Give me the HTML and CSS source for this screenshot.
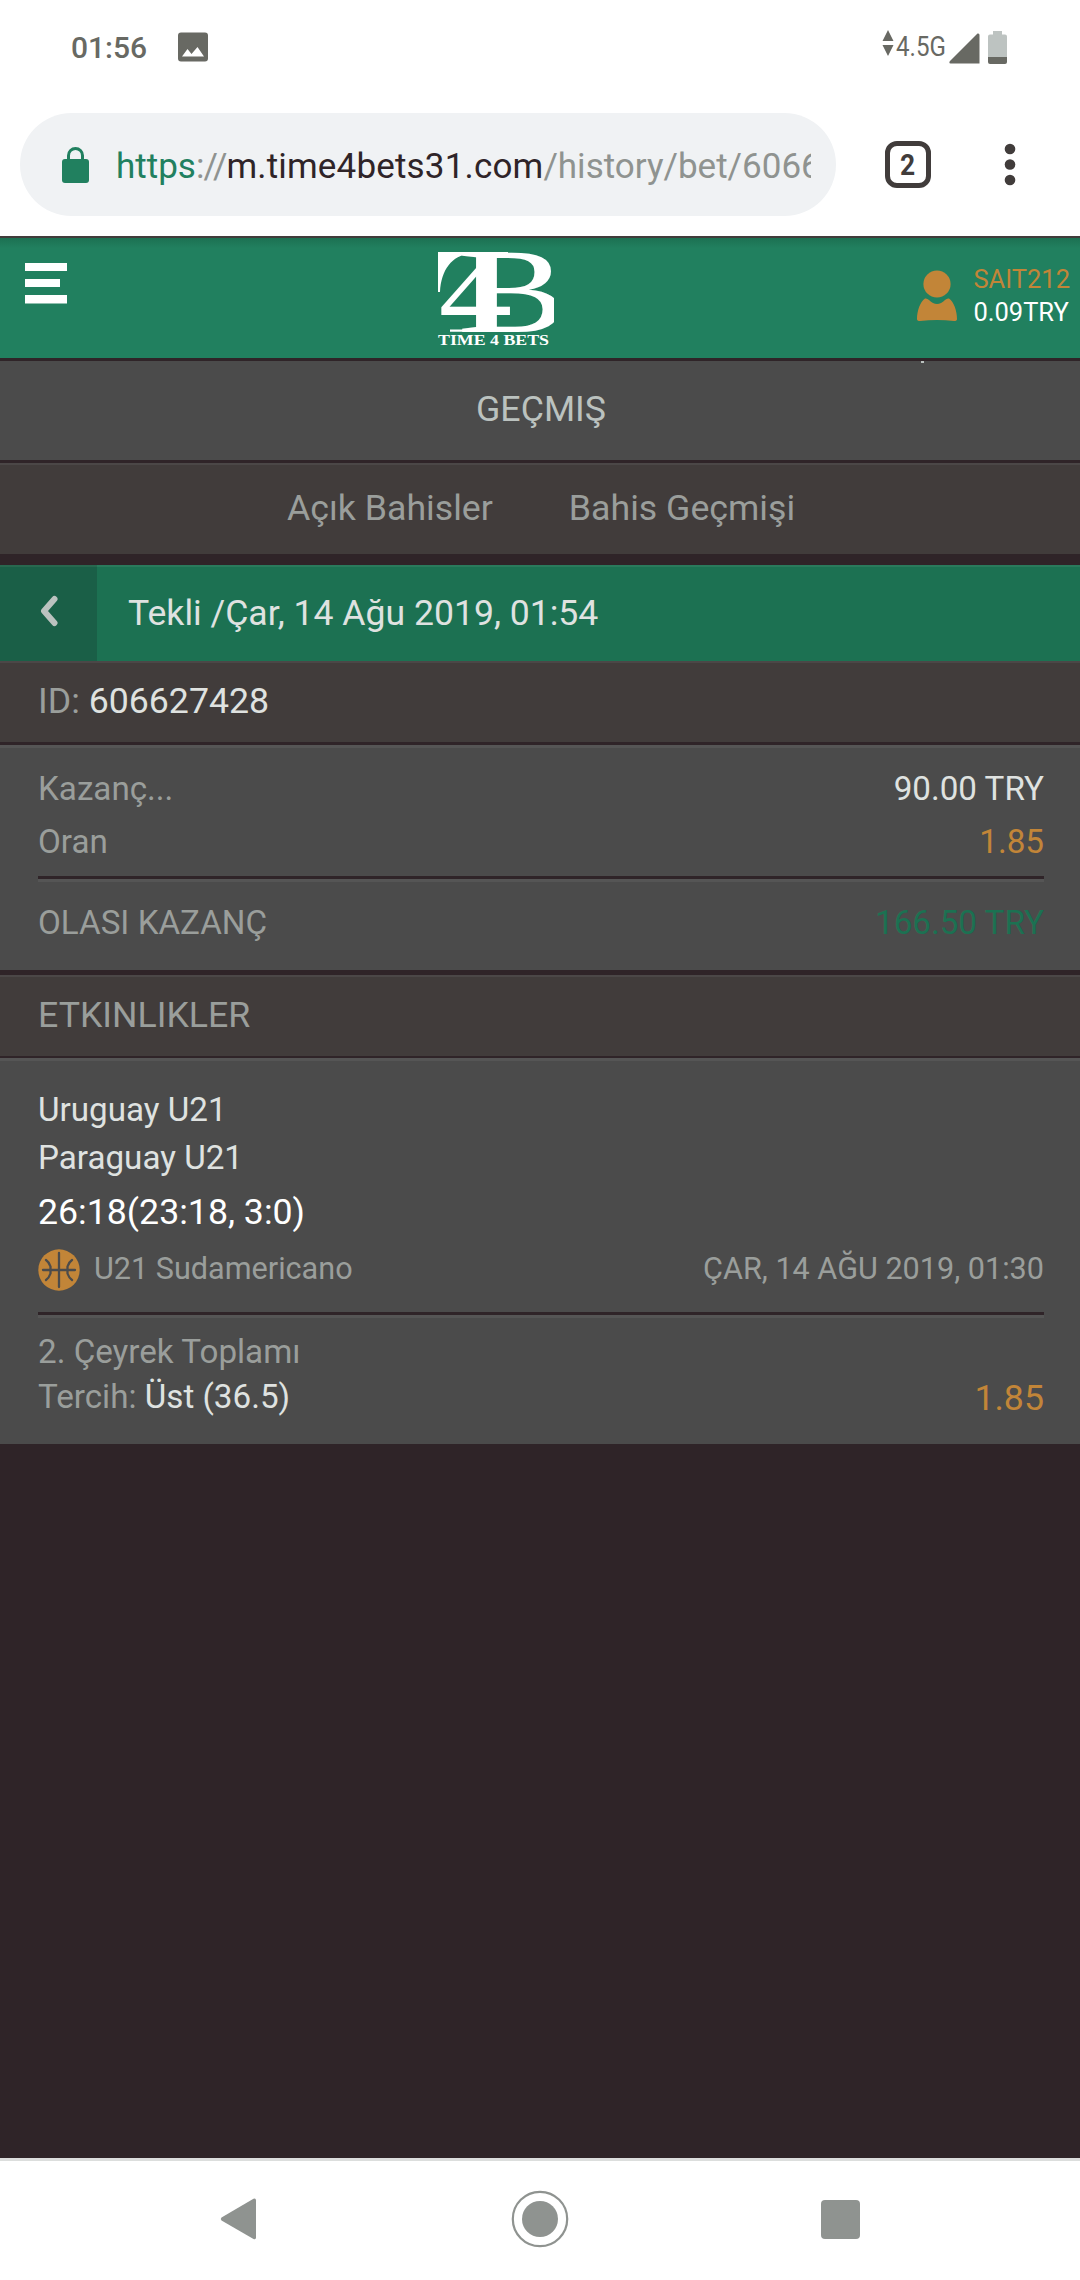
FILE: index.html
```
<!DOCTYPE html>
<html lang="tr">
<head>
  <meta charset="UTF-8" />
  <meta name="viewport" content="width=device-width, initial-scale=1.0"/>
  <title>Time 4 Bets - Bahis Geçmişi</title>
  <link rel="stylesheet" href="styles.css">
</head>
<body>
  <div class="status-bar">
    <span class="clock">01:56</span>
    <svg class="picture-icon" width="30" height="30" viewBox="0 0 30 30">
      <path fill="#686963" fill-rule="evenodd" d="M3 0.5h24a3 3 0 0 1 3 3v23a3 3 0 0 1-3 3H3a3 3 0 0 1-3-3v-23a3 3 0 0 1 3-3zM4 24.5h22L19.500 15l-6 7-4-5z"/>
    </svg>
    <div class="status-right">
      <svg width="12" height="27" viewBox="0 0 12 27">
        <path fill="#686963" d="M6 0l5.500 11H.5zM.5 15h11L6 26z"/>
      </svg>
      <span class="network">4.5G</span>
      <svg class="signal" width="31" height="31" viewBox="0 0 31 31">
        <path fill="#686963" d="M28.500 .5Q30.500 0 30.500 2v28.500H1.500Q-.5 30 1 28z"/>
      </svg>
      <svg class="battery" width="19" height="33" viewBox="0 0 19 33">
        <path fill="#bdc3c1" d="M5 0h9v3.500h3a2 2 0 0 1 2 2V26H0V5.500a2 2 0 0 1 2-2h3z"/>
        <path fill="#686963" d="M0 26h19v5a2 2 0 0 1-2 2H2a2 2 0 0 1-2-2z"/>
      </svg>
    </div>
  </div>

  <div class="browser-bar">
    <div class="address">
      <svg class="lock" width="27" height="36" viewBox="0 0 27 36">
        <rect x="0" y="12" width="27" height="24" rx="3" fill="#21805f"/>
        <path d="M6.500 13V8.500a7 7 0 0 1 14 0V13" fill="none" stroke="#21805f" stroke-width="3"/>
      </svg>
      <div class="url"><span class="scheme">https</span><span class="slashes">://</span><span class="domain">m.time4bets31.com</span><span>/history/bet/606627428</span></div>
    </div>
    <div class="tab-count"><span>2</span></div>
    <svg class="dots" width="12" height="43" viewBox="0 0 12 43">
      <g fill="#413c3b">
        <circle cx="6" cy="6" r="5.300"/>
        <circle cx="6" cy="21.500" r="5.300"/>
        <circle cx="6" cy="37" r="5.300"/>
      </g>
    </svg>
  </div>

  <header class="header">
    <svg class="menu" width="42" height="41" viewBox="0 0 42 41">
      <path fill="#fff" d="M0 0h42v8H0zM0 16h35v8H0zM0 32h42v8.500H0z"/>
    </svg>
    <svg class="logo" width="118" height="96" viewBox="436 250 118 96">
      <g fill="#fff">
        <path d="M438 252h70v2h-38C452 255 441 270 440 292h-2z"/>
        <path d="M450 329.500h64v2.200h-64z"/>
        <text class="logo-mark" transform="translate(438.500 331.700) scale(1.250 1)" font-size="118">4</text>
        <text class="logo-mark" transform="translate(457.500 331.700) scale(1.360 1)" font-size="121">B</text>
        <text class="logo-name" x="438" y="344.500" font-size="15.500" textLength="111" lengthAdjust="spacingAndGlyphs">TIME 4 BETS</text>
      </g>
    </svg>
    <div class="user">
      <svg width="40" height="52" viewBox="0 0 40 52">
        <g fill="#c28538">
          <circle cx="20" cy="14" r="13.600"/>
          <path d="M8 28.500q2-.5 4 1.500 8 8 16 0 2-2 4-1.500C37 32 40 41 40 49q0 2-3 2-17-2-34 0-3 0-3-2C0 41 3 32 8 28.500z"/>
        </g>
      </svg>
      <div class="user-info">
        <div class="name">SAIT212</div>
        <div class="balance">0.09TRY</div>
      </div>
    </div>
  </header>

  <main class="content">
    <h1 class="title">GEÇMIŞ</h1>
    <nav class="tabs">
      <a>Açık Bahisler</a>
      <a>Bahis Geçmişi</a>
    </nav>

    <div class="bet-head">
      <div class="back">
        <svg width="18" height="32" viewBox="0 0 18 32">
          <path d="M14.500 4L4 16l10.500 12" fill="none" stroke="#bbc2bf" stroke-width="6" stroke-linecap="round" stroke-linejoin="round"/>
        </svg>
      </div>
      <div class="bet-title">Tekli /Çar, 14 Ağu 2019, 01:54</div>
    </div>

    <div class="bar bet-id">ID: <b>606627428</b></div>

    <section class="summary">
      <div class="row"><span>Kazanç...</span><span class="light">90.00 TRY</span></div>
      <div class="row"><span>Oran</span><span class="orange">1.85</span></div>
      <div class="divider"></div>
      <div class="row total"><span>OLASI KAZANÇ</span><span class="green">166.50 TRY</span></div>
    </section>

    <div class="bar events-title">ETKINLIKLER</div>

    <section class="event">
      <div class="team">Uruguay U21</div>
      <div class="team">Paraguay U21</div>
      <div class="score">26:18(23:18, 3:0)</div>
      <div class="league">
        <svg width="42" height="42" viewBox="0 0 42 42">
          <circle cx="21" cy="21" r="20.700" fill="#c28538"/>
          <path d="M21 4v34M5 21h32M8 11q3 2 4.500 6.500v7Q11 29 8 31M34 11q-3 2-4.500 6.500v7Q31 29 34 31" fill="none" stroke="#4b4b4b" stroke-width="2.300" stroke-linecap="round"/>
        </svg>
        <span>U21 Sudamericano</span>
        <span class="date">ÇAR, 14 AĞU 2019, 01:30</span>
      </div>
      <div class="divider"></div>
      <div class="pick">2. Çeyrek Toplamı</div>
      <div class="pick choice">
        <span>Tercih: <b>Üst (36.5)</b></span>
        <span class="orange">1.85</span>
      </div>
    </section>
  </main>

  <footer class="nav-bar">
    <svg width="37" height="42" viewBox="0 0 37 42">
      <path fill="#8f9390" d="M33.500 .8Q36 0 36 2.500v37q0 2.500-2.500 1.500L1.500 22.500Q0 21 1.500 19.500z"/>
    </svg>
    <svg class="home" width="58" height="58" viewBox="0 0 58 58">
      <circle cx="29" cy="29" r="27.200" fill="none" stroke="#8f9390" stroke-width="2.200"/>
      <circle cx="29" cy="29" r="18" fill="#8f9390"/>
    </svg>
    <svg width="39" height="39" viewBox="0 0 39 39">
      <rect width="39" height="39" rx="4" fill="#8f9390"/>
    </svg>
  </footer>
</body>
</html>
```
FILE: styles.css
```
* {
  box-sizing: border-box;
}

body {
  margin: 0;
  width: 1080px;
  height: 2280px;
  overflow: hidden;
  display: flex;
  flex-direction: column;
  background: #2f2428;
  color: #9a9e9b;
  font-family: Roboto, sans-serif;
  font-size: 35.7px;
}

svg {
  display: block;
  flex-shrink: 0;
}

b {
  font-weight: normal;
  color: #dfe2e0;
}

/* phone status bar */
.status-bar {
  height: 96px;
  padding: 0 73px 0 71px;
  display: flex;
  align-items: center;
  background: #fff;
  color: #686963;
}

.clock {
  padding-bottom: 2px;
  font-size: 30px;
  font-weight: 500;
}

.picture-icon {
  margin: -2px 0 0 31px;
}

.status-right {
  margin-left: auto;
  display: flex;
  align-items: center;
  padding-bottom: 3px;
}

.status-right > svg:first-child {
  margin-top: -7px;
}

.network {
  width: 50px;
  margin-left: 2px;
  font-size: 28px;
  transform: scaleX(0.86);
  transform-origin: left center;
}

.signal {
  margin: 3px 0 0 3px;
}

.battery {
  margin: 2px 0 0 8px;
}

/* browser toolbar */
.browser-bar {
  height: 140px;
  padding: 17px 64px 0 20px;
  display: flex;
  align-items: flex-start;
  background: #fff;
}

.address {
  width: 816px;
  height: 103px;
  padding: 0 25px 0 42px;
  display: flex;
  align-items: center;
  border-radius: 52px;
  background: #f0f2f4;
}

.lock {
  margin-right: 27px;
}

.url {
  flex: 1;
  overflow: hidden;
  white-space: nowrap;
  font-size: 35px;
  padding-top: 4px;
  color: #8f9390;
}

.scheme {
  color: #21805f;
}

.slashes {
  letter-spacing: -1px;
}

.domain {
  letter-spacing: 0.17px;
  color: #2f2428;
}

.tab-count {
  width: 46px;
  height: 47px;
  margin: 28px 0 0 49px;
  display: flex;
  align-items: center;
  justify-content: center;
  border: 5px solid #413c3b;
  border-radius: 12px;
  color: #413c3b;
  font-size: 30px;
  font-weight: 700;
  line-height: 36px;
}

.tab-count span {
  transform: scaleX(0.88);
}

.dots {
  margin: 30px 0 0 auto;
}

/* site header */
.header {
  height: 125px;
  display: flex;
  align-items: flex-start;
  border-top: 2px solid #413c3b;
  border-bottom: 3px solid #2f2428;
  background: linear-gradient(#1c7152, #21805f 10px);
}

.menu {
  margin: 25px 0 0 25px;
}

.logo {
  margin: 12px 0 0 369px;
}

.logo-mark {
  font-family: "Liberation Serif", serif;
}

.logo-name {
  font-family: "Liberation Serif", serif;
  font-weight: bold;
}

.user {
  margin: 25px 10px 0 auto;
  display: flex;
  gap: 16px;
}

.user svg {
  margin-top: 7px;
}

.user-info {
  font-size: 25.5px;
  line-height: 33px;
}

.name {
  color: #c28538;
}

.balance {
  color: #fff;
}

/* page */
.content {
  flex: 1;
}

.title {
  position: relative;
  margin: 0;
  height: 102px;
  padding: 0 0 3px 2px;
  border-bottom: 3px solid #2f2428;
  background: #4b4b4b;
  color: #bbc2bf;
  font-size: 35.7px;
  font-weight: normal;
  line-height: 96px;
  text-align: center;
}

/* tip of the text scrolled under the header */
.title::before {
  content: "";
  position: absolute;
  top: 0;
  left: 921px;
  width: 3px;
  height: 2px;
  background: #bbc2bf;
}

.tabs {
  height: 91px;
  padding-left: 287px;
  display: flex;
  gap: 76px;
  line-height: 91px;
  background: #413c3b;
  box-shadow: inset 0 2px #4b4747;
}

.bet-head {
  height: 96px;
  margin-top: 11px;
  display: flex;
  align-items: center;
  background: #1c7152;
  box-shadow: inset 0 2px #2a7a5c;
}

.back {
  width: 97px;
  height: 96px;
  padding: 0 0 4px 0;
  display: flex;
  align-items: center;
  justify-content: center;
  background: #1a5f47;
  box-shadow: inset 0 2px #28684f;
}

.bet-title {
  padding-left: 31px;
  color: #dfe2e0;
  font-size: 35.6px;
}

.bar {
  height: 81px;
  padding-left: 38px;
  line-height: 80px;
  background: #413c3b;
  box-shadow: inset 0 2px #4b4747;
}

.summary,
.event {
  padding: 0 36px 0 38px;
  background: #4b4b4b;
  box-shadow: inset 0 3px #555;
}

.summary {
  margin-top: 3px;
  height: 225px;
  padding-top: 17px;
  font-size: 33.2px;
}

.row {
  display: flex;
  justify-content: space-between;
  line-height: 53px;
}

.divider {
  height: 6px;
  margin-top: 8px;
  border-top: 3px solid #2f2428;
  border-bottom: 3px solid #555;
}

.total {
  margin-top: 14px;
}

.light {
  color: #dfe2e0;
}

.orange {
  color: #c28538;
}

.green {
  color: #1c7152;
}

.events-title {
  margin-top: 5px;
}

.event {
  margin-top: 2px;
  height: 386px;
  padding-top: 28px;
}

.team {
  color: #dfe2e0;
  font-size: 33.2px;
  line-height: 48px;
}

.score {
  color: #fff;
  line-height: 61px;
}

.league {
  height: 53px;
  display: flex;
  align-items: center;
  font-size: 30.6px;
}

.league span {
  margin-left: 14px;
  padding-bottom: 2px;
}

.league .date {
  margin-left: auto;
}

.event .divider {
  margin: 16px 0 11px;
}

.pick {
  font-size: 33.2px;
  line-height: 45px;
}

.choice {
  display: flex;
  justify-content: space-between;
}

.choice .orange {
  font-size: 35.7px;
  line-height: 48px;
}

/* phone navigation */
.nav-bar {
  height: 122px;
  padding: 0 220px 3px;
  display: flex;
  align-items: center;
  justify-content: space-between;
  border-top: 3px solid #dcdedd;
  background: #fff;
}

.home {
  margin-left: 2px;
}
```
